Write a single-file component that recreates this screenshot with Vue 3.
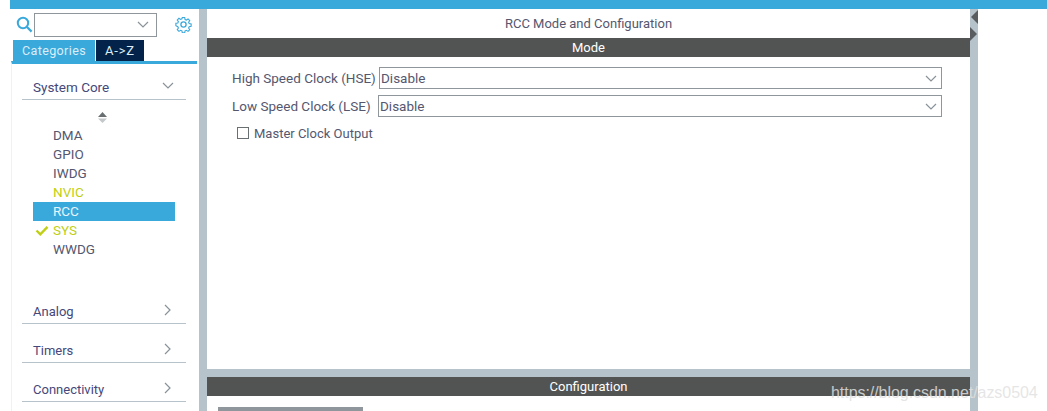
<template>
  <div class="page">
    <div class="topbar"></div>
    <div class="body">
      <aside class="side">
        <div class="search">
          <svg class="mag" width="17" height="17" viewBox="0 0 17 17"><circle cx="7" cy="7" r="5.2" fill="none" stroke="#39a9dc" stroke-width="2"/><path d="M11 11l4.6 4.6" stroke="#39a9dc" stroke-width="2.2" fill="none"/></svg>
          <div class="combo">
            <svg width="12" height="7" viewBox="0 0 12 7"><path d="M1 1l5 5 5-5" fill="none" stroke="#8a9299" stroke-width="1.2"/></svg>
          </div>
          <svg class="gear" width="17" height="17" viewBox="0 0 17 17">
            <circle cx="8.5" cy="8.5" r="2.6" fill="none" stroke="#39a9dc" stroke-width="1.3"/>
            <path d="M7.2 1h2.6l.4 2.1 1.4.6 1.8-1.2 1.8 1.8-1.2 1.8.6 1.4 2.1.4v2.6l-2.1.4-.6 1.4 1.2 1.8-1.8 1.8-1.8-1.2-1.4.6-.4 2.1H7.2l-.4-2.1-1.4-.6-1.8 1.2-1.8-1.8 1.2-1.8-.6-1.4L.3 9.8V7.2l2.1-.4.6-1.4-1.2-1.8 1.8-1.8 1.8 1.2 1.4-.6z" fill="none" stroke="#39a9dc" stroke-width="1.2" transform="translate(.6 .6) scale(.93)"/>
          </svg>
        </div>
        <div class="tabs">
          <div class="tab on">Categories</div>
          <div class="tab off">A-&gt;Z</div>
        </div>
        <div class="panel">
          <div class="cat open">
            <span>System Core</span>
            <svg width="12" height="7" viewBox="0 0 12 7"><path d="M1 1l5 5 5-5" fill="none" stroke="#8a9299" stroke-width="1.2"/></svg>
          </div>
          <div class="sort">
            <svg width="9" height="11" viewBox="0 0 9 11"><path d="M4.5 0L9 5H0z" fill="#6a6f72"/><path d="M0 6.5h9L4.5 11z" fill="#c4c8ca"/></svg>
          </div>
          <ul class="items">
            <li v-for="it in items" :key="it.name" :class="['item', it.cls]">
              <svg v-if="it.check" class="tick" width="14" height="11" viewBox="0 0 14 11"><path d="M1.5 5.5l3.8 3.8L12.5 1.8" fill="none" stroke="#c0cf13" stroke-width="2.4"/></svg>
              {{ it.name }}
            </li>
          </ul>
          <div v-for="c in cats" :key="c" class="cat closed">
            <span>{{ c }}</span>
            <svg width="7" height="12" viewBox="0 0 7 12"><path d="M1 1l5 5-5 5" fill="none" stroke="#8a9299" stroke-width="1.2"/></svg>
          </div>
        </div>
      </aside>
      <div class="split"></div>
      <main class="main">
        <div class="upper">
          <div class="title">RCC Mode and Configuration</div>
          <div class="bar">Mode</div>
          <div class="form">
            <div class="row">
              <label class="lbl hse">High Speed Clock (HSE)</label>
              <div class="select">Disable<svg width="12" height="7" viewBox="0 0 12 7"><path d="M1 1l5 5 5-5" fill="none" stroke="#8a9299" stroke-width="1.2"/></svg></div>
            </div>
            <div class="row">
              <label class="lbl lse">Low Speed Clock (LSE)</label>
              <div class="select lse-sel">Disable<svg width="12" height="7" viewBox="0 0 12 7"><path d="M1 1l5 5 5-5" fill="none" stroke="#8a9299" stroke-width="1.2"/></svg></div>
            </div>
            <div class="check"><span class="box"></span>Master Clock Output</div>
          </div>
        </div>
        <div class="hsplit"></div>
        <div class="lower">
          <div class="bar">Configuration</div>
          <div class="tabstub"></div>
        </div>
      </main>
      <div class="split right">
        <svg class="arrows" width="8" height="32" viewBox="0 0 8 32"><path d="M8 0v14L1 7z" fill="#5a5d60"/><path d="M0 17l7 7-7 7z" fill="#5a5d60"/></svg>
      </div>
      <div class="gutter"></div>
    </div>
    <div class="mark">https://blog.csdn.net/azs0504</div>
  </div>
</template>

<script setup>
const items = [
  { name: 'DMA' },
  { name: 'GPIO' },
  { name: 'IWDG' },
  { name: 'NVIC', cls: 'warn' },
  { name: 'RCC', cls: 'sel' },
  { name: 'SYS', cls: 'warn', check: true },
  { name: 'WWDG' }
]
const cats = ['Analog', 'Timers', 'Connectivity']
</script>

<style>
html, body { margin: 0; background: #fff; overflow: hidden; }
</style>

<style scoped>
.page { position: relative; width: 1047px; height: 411px; overflow: hidden; padding-left: 10px; box-sizing: border-box; font-family: Roboto, "Liberation Sans", sans-serif; font-size: 13.5px; font-weight: 400; color: #55576f; background: #fff; }
.topbar { height: 9px; background: #39a9dc; }
.body { display: flex; height: 402px; }
.side { width: 188px; flex: none; display: flex; flex-direction: column; background: #fff; }
.search { height: 31px; flex: none; display: flex; align-items: center; padding-left: 6px; }
.mag { margin-top: -1px; }
.combo { width: 114px; height: 22px; margin-left: 1px; border: 1px solid #8f979c; display: flex; align-items: center; justify-content: flex-end; padding-right: 7px; }
.gear { margin-left: 18px; }
.tabs { display: flex; flex: none; padding-left: 3px; height: 21px; }
.tab { height: 21px; line-height: 21px; text-align: center; color: #dcedf6; font-size: 12.5px; letter-spacing: .4px; }
.on { width: 82px; background: #39a9dc; margin-right: 1px; }
.off { width: 48px; background: #03234b; font-size: 13px; letter-spacing: .8px; }
.panel { flex: 1; min-height: 0; border-top: 3px solid #39a9dc; margin: 0 1px; padding: 0 11px 0 10px; border-left: 1px solid #f0f1f2; background: #fff; }
.cat { height: 35px; box-sizing: border-box; border-bottom: 1px solid #b6c3ca; display: flex; align-items: flex-end; justify-content: space-between; padding: 0 0 4px 11px; color: #44487a; margin-bottom: 4px; font-size: 13px; }
.cat svg { margin-right: 15px; margin-bottom: 3px; }
.cat.open { height: 36px; font-size: 13.5px; }
.cat.open svg { margin-right: 12px; margin-bottom: 6px; }
.sort { height: 14px; padding-left: 76px; margin-top: 12px; }
.sort svg { display: block; }
.items { list-style: none; margin: 0 0 0 11px; padding: 0; height: 163px; }
.item { position: relative; height: 19px; line-height: 19px; padding-left: 20px; width: 142px; box-sizing: border-box; color: #55576f; }
.warn { color: #c0cf13; }
.sel { background: #39a9dc; color: #e8f4fa; }
.tick { position: absolute; left: 2px; top: 4px; }
.split { width: 8px; flex: none; background: #b6c3ca; margin-left: 1px; }
.split.right { margin-left: 0; }
.arrows { display: block; margin-top: 1px; }
.main { width: 763px; flex: none; display: flex; flex-direction: column; background: #fff; }
.upper { height: 360px; }
.title { height: 29px; line-height: 30px; text-align: center; font-size: 13px; color: #55576f; }
.bar { height: 19px; line-height: 20px; background: #525453; color: #fff; text-align: center; font-size: 13px; }
.form { padding: 10px 0 0 25px; }
.row { display: flex; align-items: center; height: 22px; margin-bottom: 6px; }
.lbl { width: 147px; flex: none; color: #55576f; white-space: nowrap; }
.lse { width: 146px; }
.select { width: 563px; height: 22px; box-sizing: border-box; border: 1px solid #8f979c; padding-left: 1px; line-height: 20px; display: flex; align-items: center; justify-content: space-between; padding-right: 4px; color: #55576f; }
.lse-sel { width: 564px; }
.check { display: flex; align-items: center; height: 20px; padding-left: 5px; color: #55576f; font-size: 13px; }
.box { width: 10px; height: 10px; border: 1px solid #6a6f72; margin-right: 5px; }
.hsplit { height: 8px; background: #b6c3ca; }
.lower { flex: 1; }
.tabstub { width: 145px; height: 4px; margin: 11px 0 0 11px; background: #8f979c; }
.mark { position: absolute; left: 831px; top: 384px; font-family: "Liberation Sans", sans-serif; font-size: 16px; letter-spacing: -.05px; color: rgba(225,225,225,.85); }
</style>
